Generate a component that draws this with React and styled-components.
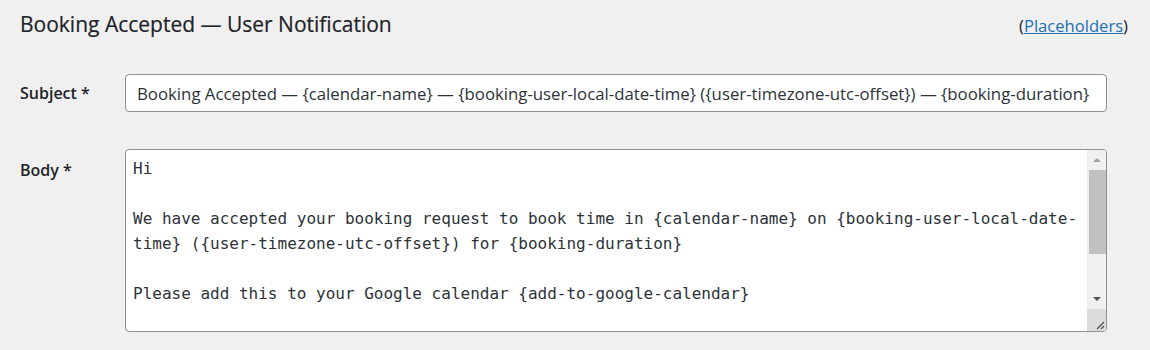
import styled, { createGlobalStyle } from "styled-components"

const GlobalStyle = createGlobalStyle`
    body {
        margin: 0;
        background: #f0f0f1;
        font-family: "Open Sans", "Noto Sans", sans-serif;
        color: #1d2327;
    }
`

const bodyText = `Hi

We have accepted your booking request to book time in {calendar-name} on {booking-user-local-date-time} ({user-timezone-utc-offset}) for {booking-duration}

Please add this to your Google calendar {add-to-google-calendar}

Thanks

{site-name}
{site-url}`

const App = () => {
    return (
        <>
            <GlobalStyle />
            <Page>
                <Header>
                    <Title>Booking Accepted — User Notification</Title>
                    <Hint>
                        (<a href="#placeholders">Placeholders</a>)
                    </Hint>
                </Header>
                <FormRow>
                    <Label htmlFor="subject">Subject *</Label>
                    <Input
                        id="subject"
                        type="text"
                        defaultValue="Booking Accepted — {calendar-name} — {booking-user-local-date-time} ({user-timezone-utc-offset}) — {booking-duration}"
                    />
                </FormRow>
                <FormRow $top>
                    <Label htmlFor="body" $top>Body *</Label>
                    <TextBox>
                        <TextArea id="body" defaultValue={bodyText} spellCheck={false} />
                        <ScrollBar>
                            <ScrollButton>
                                <Arrow $up />
                            </ScrollButton>
                            <Track>
                                <Thumb />
                            </Track>
                            <ScrollButton>
                                <Arrow />
                            </ScrollButton>
                            <Grip>
                                <svg width="10" height="10" viewBox="0 0 10 10">
                                    <path d="M9 2 L2 9 M9 6 L6 9" stroke="#505050" strokeWidth="1.3" fill="none" />
                                </svg>
                            </Grip>
                        </ScrollBar>
                    </TextBox>
                </FormRow>
            </Page>
        </>
    )
}

export default App

const Page = styled.div`
    padding: 11px 22px 0 20px;
`

const Header = styled.div`
    display: flex;
    justify-content: space-between;
    align-items: baseline;
    margin-bottom: 37px;
`

const Title = styled.h2`
    margin: 0;
    font-size: 21px;
    line-height: 26px;
    font-weight: 400;
    color: #1d2327;
    -webkit-text-stroke: 0.2px #1d2327;
`

const Hint = styled.span`
    font-size: 16.6px;
    color: #1d2327;

    a {
        color: #2271b1;
        text-decoration: underline;
    }
`

const FormRow = styled.div`
    display: grid;
    grid-template-columns: 105px 982px;
    align-items: ${(p) => (p.$top ? "start" : "center")};
    margin-bottom: 37px;

    &:last-child {
        margin-bottom: 0;
    }
`

const Label = styled.label`
    font-size: 16px;
    line-height: 24px;
    font-weight: 600;
    color: #1d2327;
    padding-top: ${(p) => (p.$top ? "9px" : "0")};
`

const Input = styled.input`
    box-sizing: border-box;
    width: 100%;
    height: 38px;
    padding: 0 11px;
    border: 1px solid #8c8f94;
    border-radius: 4px;
    background: #fff;
    color: #2c3338;
    font-family: "Open Sans", "Noto Sans", sans-serif;
    font-size: 16.8px;
    outline: none;
`

const TextBox = styled.div`
    display: flex;
    height: 183px;
    box-sizing: border-box;
    border: 1px solid #8c8f94;
    border-radius: 4px;
    background: #fff;
    overflow: hidden;
`

const TextArea = styled.textarea`
    flex: 1;
    min-width: 0;
    border: 0;
    margin: 0;
    padding: 6px 8px 0 7px;
    resize: none;
    overflow: hidden;
    outline: none;
    background: transparent;
    color: #2c3338;
    font-family: "DejaVu Sans Mono", monospace;
    font-size: 16px;
    line-height: 25px;
`

const ScrollBar = styled.div`
    display: flex;
    flex-direction: column;
    width: 19px;
    background: #f0f0f0;
`

const ScrollButton = styled.div`
    height: 20px;
    flex: none;
    display: flex;
    align-items: center;
    justify-content: center;
`

const Arrow = styled.span`
    width: 0;
    height: 0;
    border-left: 4px solid transparent;
    border-right: 4px solid transparent;
    border-bottom: ${(p) => (p.$up ? "4px solid #a3a3a3" : "none")};
    border-top: ${(p) => (p.$up ? "none" : "4px solid #505050")};
`

const Track = styled.div`
    flex: 1;
    display: flex;
    flex-direction: column;
    padding: 0 0 0 2px;
`

const Thumb = styled.div`
    height: 84px;
    background: #c1c1c1;
`

const Grip = styled.div`
    height: 21px;
    flex: none;
    background: #dcdcdc;
    display: flex;
    align-items: flex-end;
    justify-content: flex-end;
    padding: 0 1px 1px 0;
`
